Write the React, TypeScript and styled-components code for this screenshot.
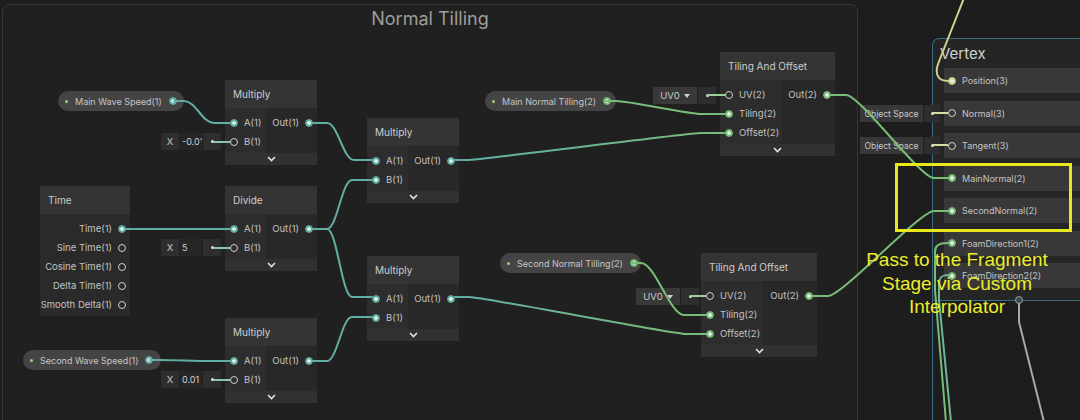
import React from "react";
import styled, { createGlobalStyle } from "styled-components";

const TEAL = "#62aea5";
const GREEN = "#78bd77";
const VEC3 = "#cdd38b";

const GlobalStyle = createGlobalStyle`
  html, body { margin: 0; padding: 0; background: #1c1c1c; }
`;

type PortDef = { label: string; c?: string; open?: boolean };

// unity style edge: stub out, diagonal, stub in
const wire = (x1: number, y1: number, x2: number, y2: number, s1 = 12, s2 = 12) => {
    const a = x1 + s1;
    const b = x2 - s2;
    const k = Math.min((b - a) * 0.4, 14);
    return `M${x1} ${y1}H${a}C${a + k} ${y1} ${b - k} ${y2} ${b} ${y2}H${x2}`;
};

const Chevron = () => (
    <svg width="9" height="6" viewBox="0 0 9 6">
        <path d="M1 1l3.5 3.5L8 1" stroke="#e2e2e2" strokeWidth="1.6" fill="none" />
    </svg>
);

const GraphNode = ({ x, y, w, inW, title, ins, outs }: {
    x: number; y: number; w: number; inW: number; title: string; ins: PortDef[]; outs: PortDef[];
}) => (
    <NodeBox $x={x} $y={y} $w={w}>
        <NodeHeader>{title}</NodeHeader>
        <NodeBody>
            <InCol $w={inW}>
                {ins.map((p) => (
                    <InRow key={p.label}>
                        <Port $c={p.c || TEAL} $open={p.open} />
                        {p.label}
                    </InRow>
                ))}
            </InCol>
            <OutCol>
                {outs.map((p) => (
                    <OutRow key={p.label}>
                        {p.label}
                        <Port $c={p.c || TEAL} $open={p.open} />
                    </OutRow>
                ))}
            </OutCol>
        </NodeBody>
        <NodeFooter>
            <Chevron />
        </NodeFooter>
    </NodeBox>
);

const Property = ({ x, y, w, label, c }: { x: number; y: number; w: number; label: string; c: string }) => (
    <Pill $x={x} $y={y} $w={w}>
        <PillDot />
        <PillText>{label}</PillText>
        <Port $c={c} />
    </Pill>
);

const ValueField = ({ x, y, value }: { x: number; y: number; value: string }) => (
    <Field $x={x} $y={y}>
        <FieldLabel>X</FieldLabel>
        <FieldValue>{value}</FieldValue>
        <DotCell>
            <Dot />
        </DotCell>
    </Field>
);

const UvField = ({ x, y }: { x: number; y: number }) => (
    <Field $x={x} $y={y}>
        <Select $w={44}>
            UV0 <Caret />
        </Select>
        <DotCell>
            <Dot />
        </DotCell>
    </Field>
);

const SpaceField = ({ x, y }: { x: number; y: number }) => (
    <Field $x={x} $y={y}>
        <Select $w={63} $small>Object Space</Select>
        <DotCell $w={16}>
            <Dot />
        </DotCell>
    </Field>
);

const slots: PortDef[] = [
    { label: "Position(3)", c: VEC3 },
    { label: "Normal(3)", open: true },
    { label: "Tangent(3)", open: true },
    { label: "MainNormal(2)", c: GREEN },
    { label: "SecondNormal(2)", c: GREEN },
    { label: "FoamDirection1(2)", c: GREEN },
    { label: "FoamDirection2(2)", c: GREEN },
];

const App = () => {
    return (
        <>
            <GlobalStyle />
            <Canvas>
                <GroupFrame>
                    <GroupTitle>Normal Tilling</GroupTitle>
                </GroupFrame>

                <Property x={58} y={91} w={126} label="Main Wave Speed(1)" c={TEAL} />
                <Property x={23} y={350} w={138} label="Second Wave Speed(1)" c={TEAL} />
                <Property x={485} y={91} w={131} label="Main Normal Tilling(2)" c={GREEN} />
                <Property x={500} y={253} w={141} label="Second Normal Tilling(2)" c={GREEN} />

                <GraphNode x={225} y={80} w={92} inW={41} title="Multiply"
                    ins={[{ label: "A(1)" }, { label: "B(1)", open: true }]} outs={[{ label: "Out(1)" }]} />
                <GraphNode x={225} y={186} w={92} inW={41} title="Divide"
                    ins={[{ label: "A(1)" }, { label: "B(1)", open: true }]} outs={[{ label: "Out(1)" }]} />
                <GraphNode x={225} y={318} w={92} inW={41} title="Multiply"
                    ins={[{ label: "A(1)" }, { label: "B(1)", open: true }]} outs={[{ label: "Out(1)" }]} />
                <GraphNode x={367} y={118} w={92} inW={41} title="Multiply"
                    ins={[{ label: "A(1)" }, { label: "B(1)" }]} outs={[{ label: "Out(1)" }]} />
                <GraphNode x={367} y={256} w={92} inW={41} title="Multiply"
                    ins={[{ label: "A(1)" }, { label: "B(1)" }]} outs={[{ label: "Out(1)" }]} />
                <GraphNode x={720} y={52} w={115} inW={62} title="Tiling And Offset"
                    ins={[{ label: "UV(2)", open: true }, { label: "Tiling(2)", c: GREEN }, { label: "Offset(2)", c: GREEN }]}
                    outs={[{ label: "Out(2)", c: GREEN }]} />
                <GraphNode x={701} y={253} w={116} inW={62} title="Tiling And Offset"
                    ins={[{ label: "UV(2)", open: true }, { label: "Tiling(2)", c: GREEN }, { label: "Offset(2)", c: GREEN }]}
                    outs={[{ label: "Out(2)", c: GREEN }]} />

                <TimeNode>
                    <NodeHeader>Time</NodeHeader>
                    <TimeBody>
                        <OutRow>Time(1)<Port $c={TEAL} /></OutRow>
                        <OutRow>Sine Time(1)<Port $c={TEAL} $open /></OutRow>
                        <OutRow>Cosine Time(1)<Port $c={TEAL} $open /></OutRow>
                        <OutRow>Delta Time(1)<Port $c={TEAL} $open /></OutRow>
                        <OutRow>Smooth Delta(1)<Port $c={TEAL} $open /></OutRow>
                    </TimeBody>
                </TimeNode>

                <ValueField x={161} y={133} value="-0.0'" />
                <ValueField x={161} y={239} value="5" />
                <ValueField x={161} y={371} value="0.01" />
                <UvField x={653} y={87} />
                <UvField x={636} y={288} />

                <ContextBox>
                    <ContextTitle>Vertex</ContextTitle>
                    <SlotList>
                        {slots.map((s) => (
                            <Slot key={s.label}>
                                <Port $c={s.c || GREEN} $open={s.open} />
                                {s.label}
                            </Slot>
                        ))}
                    </SlotList>
                </ContextBox>
                <FragmentEdge />
                <FlowPort />

                <SpaceField x={860} y={105} />
                <SpaceField x={860} y={137} />

                <Wires width="1080" height="420" viewBox="0 0 1080 420">
                    <defs>
                        <linearGradient id="tg1" gradientUnits="userSpaceOnUse" x1="460" y1="0" x2="725" y2="0">
                            <stop offset="0" stopColor={TEAL} />
                            <stop offset="1" stopColor={GREEN} />
                        </linearGradient>
                        <linearGradient id="tg2" gradientUnits="userSpaceOnUse" x1="460" y1="0" x2="706" y2="0">
                            <stop offset="0" stopColor={TEAL} />
                            <stop offset="1" stopColor={GREEN} />
                        </linearGradient>
                    </defs>
                    <g fill="none" strokeWidth="2" strokeLinecap="round">
                        <path d={wire(174, 101, 230, 123, 10, 16)} stroke={TEAL} />
                        <path d={wire(313, 123, 372, 160, 14, 18)} stroke={TEAL} />
                        <path d={wire(125, 229, 230, 229)} stroke={TEAL} />
                        <path d={wire(313, 229, 372, 180, 14, 20)} stroke={TEAL} />
                        <path d={wire(313, 229, 372, 297, 14, 20)} stroke={TEAL} />
                        <path d={wire(150, 360, 230, 361, 10, 20)} stroke={TEAL} />
                        <path d={wire(313, 361, 372, 317, 14, 20)} stroke={TEAL} />
                        <path d={wire(455, 160, 725, 133, 12, 24)} stroke="url(#tg1)" />
                        <path d={wire(606, 101, 725, 114, 10, 24)} stroke={GREEN} />
                        <path d={wire(455, 297, 706, 334, 14, 20)} stroke="url(#tg2)" />
                        <path d={wire(631, 263, 706, 315, 10, 22)} stroke={GREEN} />
                        <path d={wire(830, 95, 948, 178, 16, 14)} stroke={GREEN} />
                        <path d={wire(812, 296, 948, 211, 16, 14)} stroke={GREEN} />
                        <path d="M964 -2L938 64C935 73 937 81 948 81" stroke={VEC3} />
                        <path d="M946 422L935 290L935 252C935 246 938 243 948 243" stroke={GREEN} />
                        <path d="M951 422L939 300L939 284C939 278 941 275 948 275" stroke="#6fb894" />
                        <path d="M1019 304L1019 322L1044 422" stroke="#a9a9a9" />
                    </g>
                    <g fill="none" strokeWidth="2">
                        <path d="M213 142H230" stroke="#8fc1bb" />
                        <path d="M213 248H230" stroke="#8fc1bb" />
                        <path d="M213 380H230" stroke="#8fc1bb" />
                        <path d="M707 95H725" stroke="#9ccf9a" />
                        <path d="M690 296H706" stroke="#9ccf9a" />
                        <path d="M932 113H948" stroke="#d8dca0" />
                        <path d="M932 145H948" stroke="#d8dca0" />
                    </g>
                </Wires>

                <Highlight />
                <Note>
                    Pass to the Fragment
                    <br />
                    Stage via Custom
                    <br />
                    Interpolator
                </Note>
            </Canvas>
        </>
    );
};

export default App;

const Canvas = styled.div`
    position: relative;
    width: 1080px;
    height: 420px;
    overflow: hidden;
    background: #1d1d1d;
    font-family: Inter, "Liberation Sans", sans-serif;
    color: #c2c2c2;
    font-size: 9.5px;
`;

const GroupFrame = styled.div`
    position: absolute;
    left: 2px;
    top: 4px;
    width: 856px;
    height: 450px;
    box-sizing: border-box;
    border: 1px solid #343434;
    border-radius: 7px;
    background: #202020;
    display: flex;
    justify-content: center;
`;

const GroupTitle = styled.div`
    margin-top: 2px;
    font-size: 18px;
    line-height: 24px;
    color: #9d9d9d;
`;

const NodeBox = styled.div<{ $x: number; $y: number; $w: number }>`
    position: absolute;
    left: ${(p) => p.$x}px;
    top: ${(p) => p.$y}px;
    width: ${(p) => p.$w}px;
    display: flex;
    flex-direction: column;
`;

const NodeHeader = styled.div`
    height: 28px;
    display: flex;
    align-items: center;
    padding-left: 8px;
    background: #343434;
    font-size: 10px;
    color: #cdcdcd;
    white-space: nowrap;
`;

const NodeBody = styled.div`
    display: flex;
`;

const InCol = styled.div<{ $w: number }>`
    width: ${(p) => p.$w}px;
    background: #2d2d2d;
    padding: 5px 0 2px;
`;

const OutCol = styled.div`
    flex: 1;
    background: #282828;
    padding: 5px 0 2px;
`;

const InRow = styled.div`
    height: 19px;
    display: flex;
    align-items: center;
    gap: 6px;
    padding-left: 5px;
    white-space: nowrap;
`;

const OutRow = styled.div`
    height: 19px;
    display: flex;
    align-items: center;
    justify-content: flex-end;
    gap: 6px;
    padding-right: 4px;
    white-space: nowrap;
`;

const NodeFooter = styled.div`
    height: 12px;
    background: #313131;
    display: flex;
    align-items: center;
    justify-content: center;
`;

const TimeNode = styled.div`
    position: absolute;
    left: 40px;
    top: 186px;
    width: 90px;
    display: flex;
    flex-direction: column;
`;

const TimeBody = styled.div`
    background: #2a2a2a;
    padding: 5px 0 2px;
`;

const Port = styled.span<{ $c: string; $open?: boolean }>`
    flex: none;
    width: 8px;
    height: 8px;
    box-sizing: border-box;
    border-radius: 50%;
    border: 1.5px solid ${(p) => (p.$open ? "#cfcfcf" : p.$c)};
    background: ${(p) =>
        p.$open ? "transparent" : `radial-gradient(circle, #e4f2ec 0 1.5px, ${p.$c} 2px)`};
`;

const Pill = styled.div<{ $x: number; $y: number; $w: number }>`
    position: absolute;
    left: ${(p) => p.$x}px;
    top: ${(p) => p.$y}px;
    width: ${(p) => p.$w}px;
    height: 20px;
    box-sizing: border-box;
    border-radius: 10px;
    background: #444444;
    display: flex;
    align-items: center;
    padding: 0 11px 0 7px;
    gap: 7px;
    font-size: 9px;
    color: #c6c6c6;
`;

const PillDot = styled.span`
    flex: none;
    width: 3px;
    height: 3px;
    border-radius: 50%;
    background: #9ed07a;
`;

const PillText = styled.span`
    flex: 1;
    white-space: nowrap;
`;

const Field = styled.div<{ $x: number; $y: number }>`
    position: absolute;
    left: ${(p) => p.$x}px;
    top: ${(p) => p.$y}px;
    height: 17px;
    display: flex;
    gap: 1px;
`;

const FieldLabel = styled.div`
    width: 18px;
    background: #2e2e2e;
    display: flex;
    align-items: center;
    justify-content: center;
    color: #c8c8c8;
`;

const FieldValue = styled.div`
    width: 22px;
    background: #262626;
    display: flex;
    align-items: center;
    padding-left: 2px;
    box-sizing: border-box;
    font-size: 9px;
    color: #cfcfcf;
    white-space: nowrap;
`;

const DotCell = styled.div<{ $w?: number }>`
    width: ${(p) => p.$w || 18}px;
    background: #2e2e2e;
    display: flex;
    align-items: center;
    justify-content: center;
`;

const Dot = styled.span`
    width: 3px;
    height: 3px;
    border-radius: 50%;
    background: #e6e6e6;
`;

const Select = styled.div<{ $w: number; $small?: boolean }>`
    width: ${(p) => p.$w}px;
    background: #383838;
    display: flex;
    align-items: center;
    justify-content: center;
    gap: 4px;
    font-size: ${(p) => (p.$small ? 8.5 : 9.5)}px;
    color: #c8c8c8;
    white-space: nowrap;
`;

const Caret = styled.span`
    width: 0;
    height: 0;
    border-left: 3.5px solid transparent;
    border-right: 3.5px solid transparent;
    border-top: 4px solid #d0d0d0;
`;

const ContextBox = styled.div`
    position: absolute;
    left: 932px;
    top: 38px;
    width: 160px;
    height: 263px;
    box-sizing: border-box;
    border: 1px solid #3a6c83;
    border-right: none;
    border-radius: 7px 0 0 0;
    background: #252525;
`;

const ContextTitle = styled.div`
    height: 29px;
    display: flex;
    align-items: center;
    padding-left: 7px;
    font-size: 15px;
    color: #d2d2d2;
`;

const SlotList = styled.div`
    display: flex;
    flex-direction: column;
    gap: 7.5px;
    padding-left: 11px;
`;

const Slot = styled.div`
    height: 25px;
    background: #383838;
    display: flex;
    align-items: center;
    gap: 6px;
    padding-left: 4px;
    font-size: 9px;
    color: #c4c4c4;
`;

const FragmentEdge = styled.div`
    position: absolute;
    left: 932px;
    top: 300px;
    width: 160px;
    height: 140px;
    border-left: 1px solid #3a6c83;
`;

const FlowPort = styled.span`
    position: absolute;
    left: 1015px;
    top: 296px;
    width: 8px;
    height: 8px;
    box-sizing: border-box;
    border-radius: 50%;
    border: 1.5px solid #9c9c9c;
    background: #3a4a55;
`;

const Wires = styled.svg`
    position: absolute;
    left: 0;
    top: 0;
    pointer-events: none;
`;

const Highlight = styled.div`
    position: absolute;
    left: 895px;
    top: 163px;
    width: 177px;
    height: 69px;
    box-sizing: border-box;
    border: 3px solid #e8e81c;
`;

const Note = styled.div`
    position: absolute;
    left: 852px;
    top: 248px;
    width: 210px;
    text-align: center;
    font-family: "Liberation Sans", Arial, sans-serif;
    font-size: 19px;
    line-height: 23.5px;
    color: #ecec2a;
`;
